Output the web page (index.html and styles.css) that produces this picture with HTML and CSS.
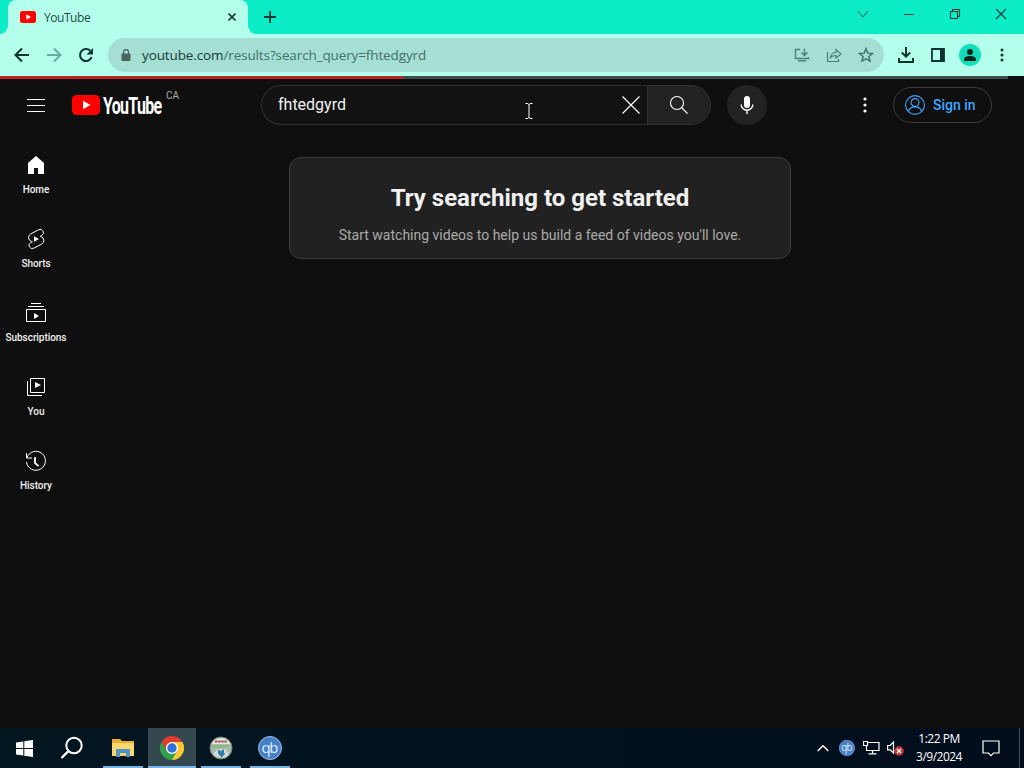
FILE: index.html
```html
<!DOCTYPE html>
<html lang="en">
<head>
  <meta charset="UTF-8" />
  <meta name="viewport" content="width=device-width, initial-scale=1.0">
  <title>YouTube</title>
  <link rel="stylesheet" href="styles.css">
</head>
<body>
  <!-- Browser tabs -->
  <div class="titlebar">
    <div class="tab">
      <svg class="favicon" width="16" height="12" viewBox="0 0 16 12"><rect width="16" height="12" rx="2.5" fill="#f00"/><path d="M6.3 3.3v5.4L11 6z" fill="#fff"/></svg>
      <span class="tab-title">YouTube</span>
      <svg class="tab-close" width="8" height="8" viewBox="0 0 8 8"><path d="M.5.5l7 7M7.5.5l-7 7" stroke="#173d36" stroke-width="1.6"/></svg>
    </div>
    <svg class="new-tab" width="12" height="12" viewBox="0 0 12 12"><path d="M6 0v12M0 6h12" stroke="#0b3a33" stroke-width="1.9"/></svg>
    <div class="window-buttons">
      <svg width="46" height="28" viewBox="0 0 46 28"><path d="M18 11l5 6 5-6" fill="none" stroke="#0a5247"/></svg>
      <svg width="46" height="28" viewBox="0 0 46 28"><path d="M18 14.5h10" stroke="#063c34"/></svg>
      <svg width="46" height="28" viewBox="0 0 46 28"><path d="M18.500 11.500h7v7h-7zM20.500 11v-1.500h7v7H26" fill="none" stroke="#063c34" stroke-width="1.1"/></svg>
      <svg width="46" height="28" viewBox="0 0 46 28"><path d="M18 9l10 10M28 9L18 19" stroke="#063c34" stroke-width="1.1"/></svg>
    </div>
  </div>

  <!-- Browser toolbar -->
  <div class="toolbar">
    <div class="nav-buttons">
      <svg width="16" height="16" viewBox="0 0 16 16"><path d="M15 8H2M8 1.500L1.500 8 8 14.500" fill="none" stroke="#12332e" stroke-width="2"/></svg>
      <svg width="16" height="16" viewBox="0 0 16 16"><path d="M1 8h13M8 1.500L14.500 8 8 14.500" fill="none" stroke="#6ea89c" stroke-width="2"/></svg>
      <svg width="16" height="16" viewBox="0 0 16 16"><path d="M13.600 10.200A6 6 0 1 1 12.300 3.800" fill="none" stroke="#12332e" stroke-width="2.100"/><path d="M15 1v6.500H8.500z" fill="#12332e"/></svg>
    </div>
    <div class="omnibox">
      <svg class="lock" width="10" height="12" viewBox="0 0 10 12"><rect x=".5" y="4.500" width="9" height="7.500" rx="1" fill="#49645f"/><path d="M2.500 5V3a2.500 2.500 0 0 1 5 0v2" fill="none" stroke="#49645f" stroke-width="1.300"/></svg>
      <span class="url">youtube.com<span class="url-path">/results?search_query=fhtedgyrd</span></span>
      <div class="omnibox-icons">
        <svg width="16" height="16" viewBox="0 0 16 16"><path d="M6 2.500H1.500v9h13V10M10.500 1.500v6.500M7.500 5.500l3 3 3-3" fill="none" stroke="#4c7e74" stroke-width="1.400"/><path d="M4 13h8v1.500H4z" fill="#4c7e74"/></svg>
        <svg width="16" height="16" viewBox="0 0 16 16"><path d="M1.500 5v9.500h11V12M4.500 10.500c.5-3.500 2.500-5 5.500-5V2.500L15 7l-5 4V8.500c-2.500 0-4 .5-5.500 2z" fill="none" stroke="#4c7e74" stroke-width="1.200"/></svg>
        <svg width="16" height="16" viewBox="0 0 16 16"><path d="M8 1.800l1.800 4.300 4.700.4-3.600 3 1.100 4.600L8 11.700 4 14.100l1.100-4.600-3.600-3 4.700-.4z" fill="none" stroke="#3d7066" stroke-width="1.400"/></svg>
      </div>
    </div>
    <div class="toolbar-icons">
      <svg width="18" height="18" viewBox="0 0 18 18"><path d="M9 1v9.500M4.800 6.500L9 10.700l4.200-4.200" fill="none" stroke="#10332e" stroke-width="2"/><path d="M2 12v4h14v-4" fill="none" stroke="#10332e" stroke-width="2"/></svg>
      <svg width="14" height="14" viewBox="0 0 14 14"><path d="M1 1h12v12H1z" fill="none" stroke="#10332e" stroke-width="1.800"/><path d="M9 1h4v12H9z" fill="#10332e"/></svg>
      <svg width="22" height="22" viewBox="0 0 22 22"><circle cx="11" cy="11" r="11" fill="#10dfb9"/><circle cx="11" cy="8" r="3" fill="#04231e"/><path d="M5 17v-1.500c0-2.500 3-3.500 6-3.500s6 1 6 3.500V17z" fill="#04231e"/></svg>
      <svg width="4" height="14" viewBox="0 0 4 14"><g fill="#12332e"><circle cx="2" cy="2" r="1.500"/><circle cx="2" cy="7" r="1.500"/><circle cx="2" cy="12" r="1.500"/></g></svg>
    </div>
  </div>

  <div class="page">
    <div class="progress"><div class="progress-bar"></div></div>

    <div class="masthead">
      <svg class="menu" width="18" height="13" viewBox="0 0 18 13"><path d="M0 .5h18M0 6.500h18M0 12.500h18" stroke="#fff"/></svg>
      <svg class="logo" width="91" height="32" viewBox="0 -5 91 32">
        <rect y="1" width="28" height="20" rx="4.500" fill="#f00"/>
        <path d="M11 6.700v8.600L18.500 11z" fill="#fff"/>
        <text class="logo-text" transform="translate(31 19.600) scale(.68 1)" textLength="87">YouTube</text>
      </svg>
      <span class="country">CA</span>
      <div class="search-box">
        <span class="search-text">fhtedgyrd</span>
        <svg width="18" height="18" viewBox="0 0 18 18"><path d="M.5.5l17 17M17.500.5l-17 17" stroke="#fff" stroke-width="1.100"/></svg>
      </div>
      <div class="search-button">
        <svg width="20" height="20" viewBox="0 0 20 20"><circle cx="8" cy="8" r="6.500" fill="none" stroke="#fff" stroke-width="1.100"/><path d="M12.600 12.600l6 6" stroke="#fff" stroke-width="1.300"/></svg>
      </div>
      <div class="mic">
        <svg width="14" height="20" viewBox="0 0 14 20"><rect x="4" y="1" width="6" height="12" rx="3" fill="#fff"/><path d="M1.200 9.500a5.800 5.800 0 0 0 11.600 0M7 15.500V19" fill="none" stroke="#fff" stroke-width="1.400"/></svg>
      </div>
      <svg class="settings" width="4" height="16" viewBox="0 0 4 16"><g fill="#fff"><circle cx="2" cy="2" r="1.600"/><circle cx="2" cy="8" r="1.600"/><circle cx="2" cy="14" r="1.600"/></g></svg>
      <div class="sign-in">
        <svg width="20" height="20" viewBox="0 0 20 20"><g fill="none" stroke="#3ea6ff" stroke-width="1.100"><circle cx="10" cy="10" r="9.400"/><circle cx="10" cy="7.500" r="3.900"/><path d="M3.500 16.500c.8-3 3-4.600 6.500-4.600s5.700 1.600 6.500 4.600"/></g></svg>
        <span>Sign in</span>
      </div>
    </div>

    <div class="content">
      <div class="sidebar">
        <div class="side-item">
          <svg width="24" height="24" viewBox="0 0 24 24"><path d="M4 10v11h6v-6h4v6h6V10l-8-7z" fill="#fff"/></svg>
          <span>Home</span>
        </div>
        <div class="side-item">
          <svg width="24" height="24" viewBox="0 0 24 24"><path d="M10 14.650v-5.300L15 12z" fill="#fff"/><path d="M14.700 2.700L6.600 7a4 4 0 0 0 .7 7.300l1 .4-1.500.8a3.200 3.200 0 0 0 3 5.700l8-4.200a4 4 0 0 0-.7-7.300l-1-.4 1.500-.8a3.200 3.200 0 0 0-2.900-5.800z" fill="none" stroke="#fff"/></svg>
          <span>Shorts</span>
        </div>
        <div class="side-item">
          <svg width="24" height="24" viewBox="0 0 24 24"><path d="M10 18v-6l5 3z" fill="#fff"/><path d="M7 2.500h10M4 5.500h16M2.500 8.500h19v12h-19z" fill="none" stroke="#fff"/></svg>
          <span>Subscriptions</span>
        </div>
        <div class="side-item">
          <svg width="24" height="24" viewBox="0 0 24 24"><path d="M11 7v6l6-3z" fill="#fff"/><path d="M6.500 3.500h14v14h-14zM3.500 6v14.500H18" fill="none" stroke="#fff"/></svg>
          <span>You</span>
        </div>
        <div class="side-item">
          <svg width="24" height="24" viewBox="0 0 24 24"><path d="M2.500 4v5H8M2.900 8.800A9.500 9.500 0 1 1 2.500 13" fill="none" stroke="#fff"/><path d="M11 8v6l3.600 3.200" fill="none" stroke="#fff" stroke-width="1.800"/></svg>
          <span>History</span>
        </div>
      </div>

      <div class="feed">
        <div class="nudge">
          <h1>Try searching to get started</h1>
          <p>Start watching videos to help us build a feed of videos you'll love.</p>
        </div>
      </div>
    </div>

    <svg class="cursor" width="8" height="16" viewBox="0 0 8 16"><path d="M.5.5h2.500l1 1 1-1h2.500M4 1v14M.5 15.500h2.500l1-1 1 1h2.500" fill="none" stroke="#fff"/></svg>
  </div>

  <!-- Windows taskbar -->
  <div class="taskbar">
    <div class="task start">
      <svg width="17" height="17" viewBox="0 0 17 17"><path d="M0 2.400l7.300-1V8H0zM8.300 1.200L17 0v8H8.300zM0 9h7.300v6.600L0 14.600zM8.300 9H17v8l-8.700-1.200z" fill="#fff"/></svg>
    </div>
    <div class="task find">
      <svg width="24" height="24" viewBox="0 0 24 24"><circle cx="14" cy="9.500" r="7.700" fill="none" stroke="#fff" stroke-width="2"/><path d="M8.500 15L1.500 22" stroke="#fff" stroke-width="2.400"/></svg>
    </div>
    <div class="task open">
      <svg width="22" height="20" viewBox="0 0 22 20"><path d="M0 1h8l2 2h12v15H0z" fill="#e9ac36"/><path d="M0 5h22v13H0z" fill="#fbd66e"/><path d="M4 11h14v8h-4v-4H8v4H4z" fill="#4b96c4"/></svg>
    </div>
    <div class="task open active">
      <svg width="24" height="24" viewBox="0 0 24 24">
        <path d="M12 12V6h10.400A12 12 0 0 1 12 24z" fill="#fcc934"/>
        <path d="M1.600 6A12 12 0 0 0 12 24l5.200-9H12z" fill="#2da14c"/>
        <path d="M1.600 6A12 12 0 0 1 22.400 6H12L7 15z" fill="#e33b2e"/>
        <circle cx="12" cy="12" r="6" fill="#fff"/><circle cx="12" cy="12" r="4.700" fill="#2f70dc"/>
      </svg>
    </div>
    <div class="task open">
      <svg width="24" height="24" viewBox="0 0 24 24"><circle cx="12" cy="12" r="11" fill="#a9bba9" stroke="#6c8775"/><path d="M2.500 8a10.500 10.500 0 0 1 19 0z" fill="#e4e6e0"/><path d="M6 5.500h12" stroke="#a4544d" stroke-width="2" stroke-dasharray="2.500 .6"/><path d="M3 9h18l-4 3H3z" fill="#8dbb85"/><path d="M4 18l5-5h7l4 5a10.500 10.500 0 0 1-16 0z" fill="#d3dcda"/><path d="M9 13.500l3 1.500 3-2v4l1.500.5-4 4-4-4.500H9z" fill="#2f7fa6"/></svg>
    </div>
    <div class="task open">
      <svg width="24" height="24" viewBox="0 0 24 24"><circle cx="12" cy="12" r="11.500" fill="#447fc9" stroke="#a0bfe2"/><text class="qb" x="12" y="16.500" text-anchor="middle" textLength="17">qb</text></svg>
    </div>

    <div class="tray">
      <svg width="12" height="8" viewBox="0 0 12 8"><path d="M.7 7L6 1.700 11.300 7" fill="none" stroke="#fff" stroke-width="1.400"/></svg>
      <svg width="16" height="16" viewBox="0 0 24 24"><circle cx="12" cy="12" r="11.500" fill="#447fc9" stroke="#86ade0"/><text class="qb" x="12" y="16.500" text-anchor="middle" textLength="17">qb</text></svg>
      <svg width="17" height="14" viewBox="0 0 17 14"><path d="M5 1.500h11v8H3.500V5M.5.500h4v4h-4zM9.500 9.500v3M5.500 12.900h8" fill="none" stroke="#fff" stroke-width="1.200"/></svg>
      <svg width="18" height="16" viewBox="0 0 18 16"><path d="M.6 5.500h2.600L6.500 2v11L3.200 9.800H.6z" fill="none" stroke="#fff" stroke-width="1.200"/><circle cx="12" cy="11" r="4.700" fill="#c83a3a"/><path d="M10 9l4 4M14 9l-4 4" stroke="#fff" stroke-width="1.200"/></svg>
      <div class="clock">
        <span class="time">1:22 PM</span>
        <span class="date">3/9/2024</span>
      </div>
      <svg width="18" height="17" viewBox="0 0 18 17"><path d="M1 1h16v12h-5.500L9 15.700 6.500 13H1z" fill="none" stroke="#fff" stroke-width="1.200"/></svg>
      <div class="show-desktop"></div>
    </div>
  </div>
</body>
</html>
```
FILE: styles.css
```css
* {
  box-sizing: border-box;
}

body {
  margin: 0;
  width: 1024px;
  height: 768px;
  overflow: hidden;
  display: flex;
  flex-direction: column;
  background: #0f0f0f;
  color: #f1f1f1;
  font-family: Roboto, Arial, sans-serif;
}

svg {
  display: block;
  flex-shrink: 0;
}

/* Browser window */
.titlebar {
  height: 34px;
  display: flex;
  background: #0cecc6;
  font-family: "Open Sans", sans-serif;
}

.tab {
  position: relative;
  width: 240px;
  height: 34px;
  margin-left: 8px;
  padding: 0 12px;
  display: flex;
  align-items: center;
  background: #b4ffec;
  border-radius: 8px 8px 0 0;
}

.tab::before,
.tab::after {
  content: "";
  position: absolute;
  bottom: 0;
  width: 8px;
  height: 8px;
}

.tab::before {
  left: -8px;
  background: radial-gradient(circle at 0 0, transparent 7.5px, #b4ffec 8px);
}

.tab::after {
  right: -8px;
  background: radial-gradient(circle at 100% 0, transparent 7.5px, #b4ffec 8px);
}

.tab-title {
  margin-left: 8px;
  font-size: 12px;
  letter-spacing: -0.45px;
  color: #204b44;
}

.tab-close {
  margin-left: auto;
}

.new-tab {
  margin: 11px 0 0 16px;
}

.window-buttons {
  display: flex;
  margin-left: auto;
}

.toolbar {
  height: 42px;
  display: flex;
  align-items: center;
  background: #b4ffec;
}

.nav-buttons {
  display: flex;
  gap: 16px;
  margin-left: 14px;
}

.omnibox {
  width: 776px;
  height: 34px;
  margin-left: 14px;
  padding: 0 10px 0 13px;
  display: flex;
  align-items: center;
  background: #a5dfd4;
  border-radius: 17px;
}

.url {
  margin-left: 11px;
  font-family: "Open Sans", sans-serif;
  font-size: 13.5px;
  letter-spacing: -0.12px;
  color: #163b35;
  white-space: nowrap;
}

.url-path {
  color: #447068;
}

.omnibox-icons {
  display: flex;
  gap: 16px;
  margin-left: auto;
}

.toolbar-icons {
  display: flex;
  align-items: center;
  margin-left: 13px;
}

.toolbar-icons svg:nth-child(2) {
  margin-left: 16px;
}

.toolbar-icons svg:nth-child(3) {
  margin-left: 14px;
}

.toolbar-icons svg:nth-child(4) {
  margin-left: 19px;
}

/* YouTube */
.page {
  position: relative;
  height: 652px;
}

.progress {
  width: 1008px;
  height: 3px;
  background: #3d4f4c;
}

.progress-bar {
  width: 403px;
  height: 3px;
  background: #b9242b;
}

.masthead {
  height: 52px;
  display: flex;
  align-items: center;
}

.menu {
  margin-left: 27px;
}

.logo {
  margin-left: 27px;
}

.logo-text {
  font-size: 23.5px;
  font-weight: 700;
  fill: #fff;
}

.country {
  width: 14px;
  margin: 0 0 18px 3px;
  font-size: 10px;
  line-height: 12px;
  color: #aaa;
}

.search-box {
  width: 386px;
  height: 40px;
  margin-left: 81px;
  padding: 0 7px 0 16px;
  display: flex;
  align-items: center;
  justify-content: space-between;
  background: #121212;
  border: 1px solid #303030;
  border-right: 0;
  border-radius: 20px 0 0 20px;
}

.search-text {
  padding-bottom: 1px;
  font-size: 16px;
}

.search-button {
  width: 64px;
  height: 40px;
  display: flex;
  align-items: center;
  justify-content: center;
  background: #222;
  border: 1px solid #303030;
  border-radius: 0 20px 20px 0;
}

.mic {
  width: 40px;
  height: 40px;
  margin-left: 16px;
  display: flex;
  align-items: center;
  justify-content: center;
  background: #222;
  border-radius: 50%;
}

.settings {
  margin-left: 96px;
}

.sign-in {
  width: 99px;
  height: 36px;
  margin-left: 26px;
  padding-left: 11px;
  display: flex;
  align-items: center;
  gap: 8px;
  border: 1px solid #3c3c3c;
  border-radius: 18px;
  font-size: 14px;
  font-weight: 500;
  color: #3ea6ff;
  white-space: nowrap;
}

.sign-in span {
  padding-bottom: 1px;
}

.content {
  display: flex;
}

.sidebar {
  width: 72px;
  padding-top: 6px;
}

.side-item {
  height: 74px;
  padding-top: 16px;
  display: flex;
  flex-direction: column;
  align-items: center;
  gap: 6px;
  font-size: 10px;
  font-weight: 500;
  line-height: 14px;
  letter-spacing: -0.05px;
}

.feed {
  width: 936px;
  padding-top: 26px;
}

.nudge {
  width: 502px;
  height: 102px;
  margin: 0 auto;
  padding-top: 23px;
  background: #212121;
  border: 1px solid #3c3c3c;
  border-radius: 12px;
  text-align: center;
}

.nudge h1 {
  margin: 0;
  font-size: 24px;
  line-height: 34px;
  font-weight: 700;
}

.nudge p {
  margin: 9px 0 0;
  font-size: 14px;
  line-height: 22px;
  color: #aaa;
}

.cursor {
  position: absolute;
  left: 525px;
  top: 27px;
}

/* Windows taskbar */
.taskbar {
  height: 40px;
  display: flex;
  background: linear-gradient(90deg, #021620, #03131f 50%, #020d1c);
  font-family: "Open Sans", sans-serif;
}

.task {
  width: 40px;
  height: 40px;
  margin-left: 9px;
  display: flex;
  align-items: center;
  justify-content: center;
}

.start {
  width: 48px;
  margin-left: 0;
}

.find {
  width: 48px;
  margin-left: 0;
}

.open {
  border-bottom: 2px solid #77b4e6;
  padding-top: 2px;
}

.find + .open {
  margin-left: 7px;
}

.task.active {
  width: 48px;
  margin: 0 -4px 0 5px;
  background: #344850;
}

.qb {
  font-family: "Open Sans", sans-serif;
  font-size: 15px;
  fill: #e3f1ff;
}

.tray {
  display: flex;
  align-items: center;
  margin-left: auto;
}

.tray svg {
  margin-right: 10px;
}

.tray svg:nth-child(2) {
  margin-right: 8px;
}

.tray svg:nth-child(3) {
  margin-right: 7px;
}

.tray svg:nth-child(4) {
  margin-right: 8px;
}

.clock {
  width: 52px;
  margin-right: 17px;
  display: flex;
  flex-direction: column;
  align-items: center;
  font-size: 12px;
  line-height: 18px;
  letter-spacing: -0.5px;
  color: #fff;
  white-space: nowrap;
}

.tray .clock + svg {
  margin-right: 19px;
}

.show-desktop {
  width: 5px;
  height: 40px;
  border-left: 1px solid #46515c;
}
```
